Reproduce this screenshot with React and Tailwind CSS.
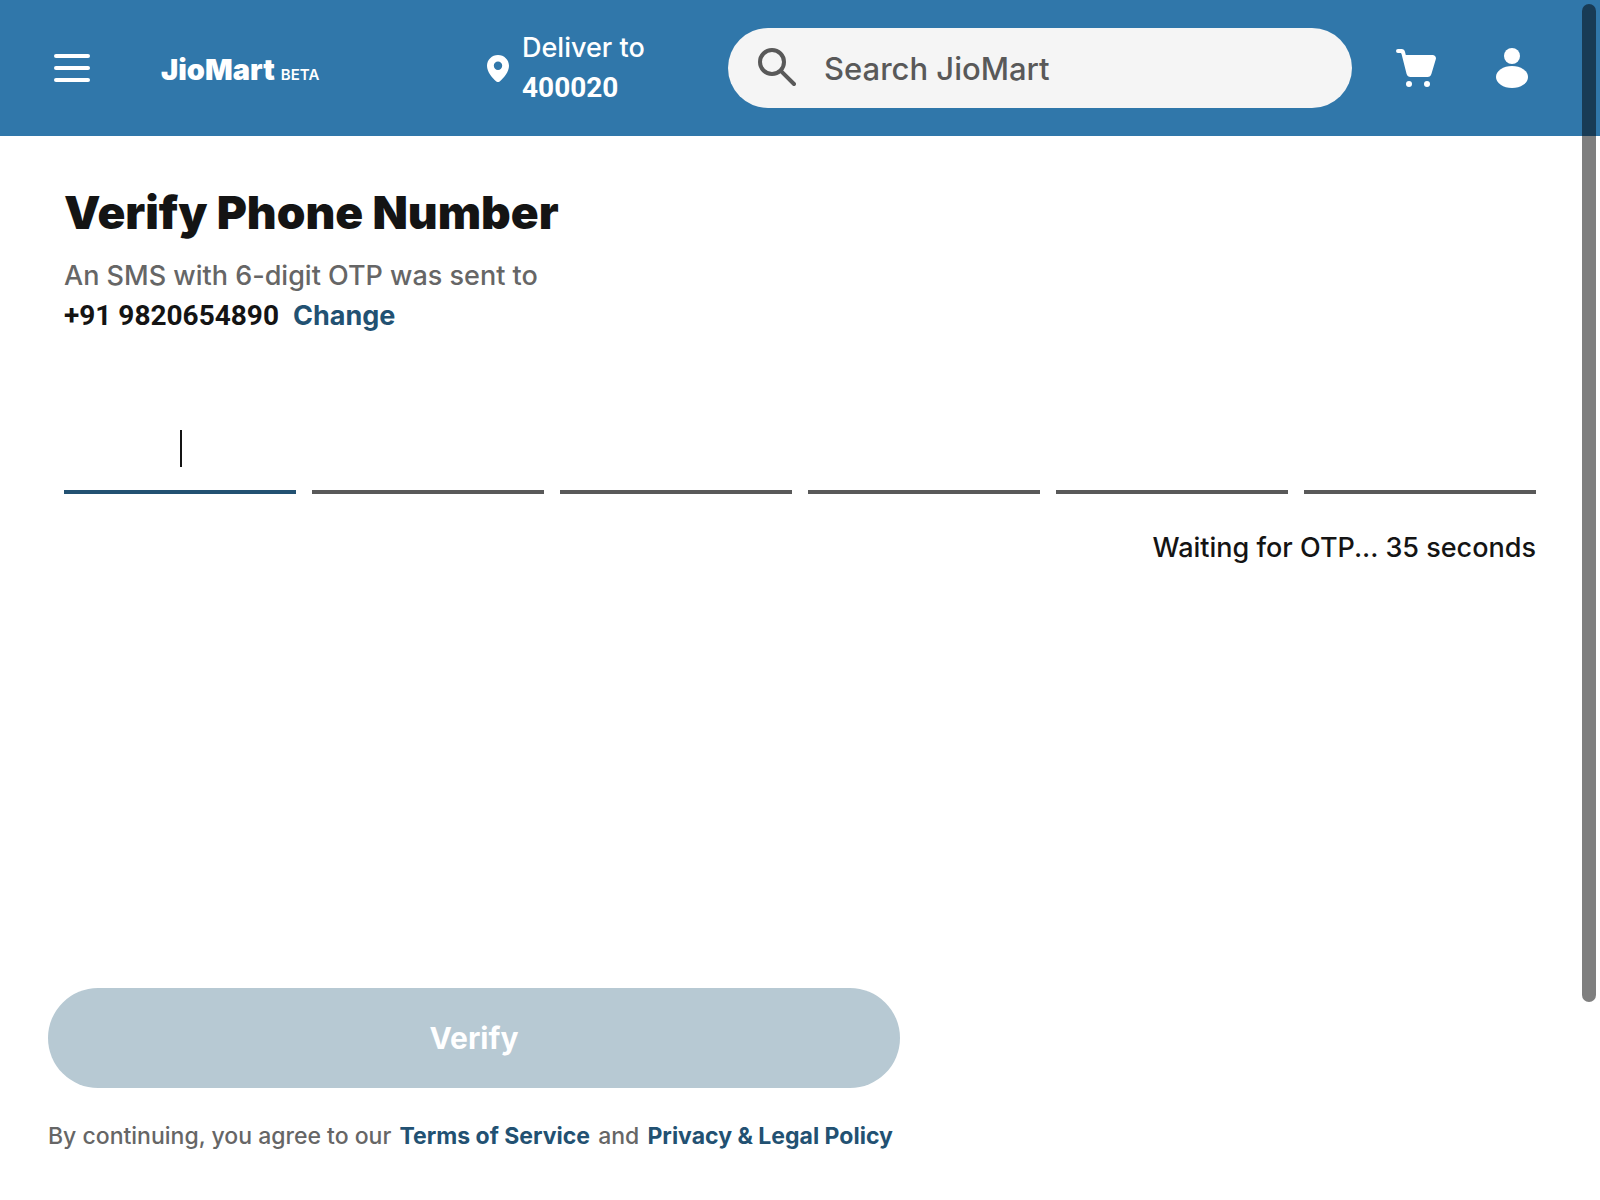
import React from "react";

function MenuIcon() {
  return (
    <svg viewBox="0 0 36 28" className="h-7 w-9" fill="currentColor" aria-hidden="true">
      <rect x="0" y="0" width="36" height="4" rx="2" />
      <rect x="0" y="12" width="36" height="4" rx="2" />
      <rect x="0" y="24" width="36" height="4" rx="2" />
    </svg>
  );
}

function PinIcon() {
  return (
    <svg viewBox="0 0 22 27" className="h-[27px] w-[22px] shrink-0" fill="currentColor" aria-hidden="true">
      <path
        fillRule="evenodd"
        d="M11 0C4.900 0 0 4.900 0 10.800c0 6.200 5 12.200 9.300 15.600a2.700 2.700 0 0 0 3.400 0C17 23 22 17 22 10.800 22 4.900 17.100 0 11 0Zm0 6.500a4.200 4.200 0 1 1 0 8.400 4.200 4.200 0 0 1 0-8.400Z"
      />
    </svg>
  );
}

function SearchIcon() {
  return (
    <svg viewBox="0 0 38 40" className="h-10 w-[38px] shrink-0" fill="none" stroke="currentColor" strokeWidth="4" strokeLinecap="round" aria-hidden="true">
      <circle cx="14" cy="14" r="12" />
      <path d="M22.800 22.800 36 36" />
    </svg>
  );
}

function CartIcon() {
  return (
    <svg viewBox="0 0 40 38" className="h-[38px] w-10" fill="currentColor" aria-hidden="true">
      <path d="M2 0h3.500c2 0 3.100 1.200 3.600 3.200L9.800 6H36.500c2.500 0 4 2 3.300 4.300L35.400 25c-.6 2-1.800 3-3.800 3H14.500c-2 0-3.300-1-3.900-3L5.600 5.300C5.400 4.400 5 4 4.200 4H2a2 2 0 0 1 0-4Z" />
      <circle cx="13" cy="35" r="3" />
      <circle cx="31" cy="35" r="3" />
    </svg>
  );
}

function UserIcon() {
  return (
    <svg viewBox="0 0 32 40" className="h-10 w-8" fill="currentColor" aria-hidden="true">
      <circle cx="16" cy="8" r="8" />
      <ellipse cx="16" cy="29" rx="16" ry="11" />
    </svg>
  );
}

function Header() {
  return (
    <header className="flex items-center bg-[#3077aa] px-[54px] py-7 text-white">
      <button type="button" aria-label="Menu" className="shrink-0">
        <MenuIcon />
      </button>
      <a href="#" className="ml-[71px] flex w-[326px] shrink-0 items-baseline gap-1.5 pt-2 leading-10">
        <span className="text-[29px] font-black">JioMart</span>
        <span className="text-[15px] font-semibold">BETA</span>
      </a>
      <button type="button" className="flex flex-1 items-center gap-[13px] text-left">
        <PinIcon />
        <span className="leading-10">
          <span className="block text-[27px] font-medium">Deliver to</span>
          <span className="block font-['Roboto',sans-serif] text-[28px] font-bold">400020</span>
        </span>
      </button>
      <label className="flex h-20 w-[624px] shrink-0 items-center gap-7 rounded-full bg-[#f5f5f5] px-[30px] text-[#595959]">
        <SearchIcon />
        <input
          type="search"
          aria-label="Search JioMart"
          placeholder="Search JioMart"
          className="min-w-0 flex-1 bg-transparent pt-0.5 text-[31px] font-medium outline-none placeholder:text-[#595959]"
        />
      </label>
      <button type="button" aria-label="Cart" className="ml-11 shrink-0">
        <CartIcon />
      </button>
      <button type="button" aria-label="Account" className="mr-[18px] ml-[60px] shrink-0">
        <UserIcon />
      </button>
    </header>
  );
}

function OtpFields() {
  return (
    <div className="mt-16 grid grid-cols-6 gap-4">
      {[1, 2, 3, 4, 5, 6].map((n) => (
        <div key={n} className="relative">
          <input
            type="text"
            inputMode="numeric"
            maxLength={1}
            aria-label={"OTP digit " + n}
            className={
              n === 1
                ? "h-[94px] w-full border-b-4 border-[#225172] bg-transparent text-center text-[32px] font-bold caret-transparent outline-none"
                : "h-[94px] w-full border-b-4 border-[#595959] bg-transparent text-center text-[32px] font-bold outline-none"
            }
          />
          {n === 1 && <span className="absolute top-[30px] left-1/2 h-[37px] w-0.5 bg-[#141414]" />}
        </div>
      ))}
    </div>
  );
}

export default function App() {
  return (
    <div className="flex min-h-screen flex-col bg-white font-['Inter','Roboto',sans-serif] text-[#141414]">
      <Header />
      <main className="flex flex-1 flex-col">
        <section className="px-16 pt-[46px]">
          <h1 className="text-[46px] leading-[60px] font-black">Verify Phone Number</h1>
          <div className="mt-3.5 text-[27px] leading-10">
            <p className="font-medium text-[#666666]">An SMS with 6-digit OTP was sent to</p>
            <p className="flex gap-3.5 font-bold">
              <span className="font-['Roboto',sans-serif] text-[28px]">+91 9820654890</span>
              <a href="#" className="text-[#225172]">Change</a>
            </p>
          </div>
          <OtpFields />
          <p className="mt-[34px] text-right text-[27px] leading-10 font-medium">Waiting for OTP... 35 seconds</p>
        </section>
        <footer className="mt-auto w-[948px] max-w-full px-12 pb-12">
          <button type="button" className="h-[100px] w-full rounded-full bg-[#b7c9d3] text-[30px] font-bold text-white">
            Verify
          </button>
          <p className="mt-8 text-[23px] leading-8 font-medium text-[#666666]">
            By continuing, you agree to our{" "}
            <a href="#" className="mx-0.5 font-bold text-[#225172]">Terms of Service</a> and{" "}
            <a href="#" className="mx-0.5 font-bold text-[#225172]">Privacy &amp; Legal Policy</a>
          </p>
        </footer>
      </main>
      <div className="pointer-events-none fixed top-1 right-1 h-[83.2%] w-3.5 rounded-full bg-black/50" />
    </div>
  );
}
